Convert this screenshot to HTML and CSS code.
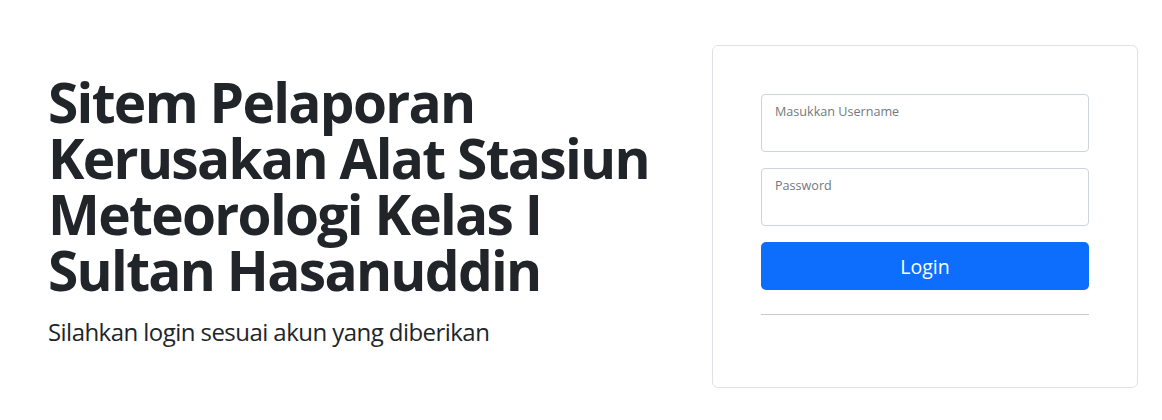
FILE: index.html
```html
<!DOCTYPE html>
<html lang="id">
<head>
<meta charset="utf-8">
<title>Login</title>
<link rel="stylesheet" href="styles.css">
</head>
<body>
<main class="page">
  <section class="intro">
    <h1 class="title">Sitem Pelaporan Kerusakan Alat Stasiun Meteorologi Kelas I Sultan Hasanuddin</h1>
    <p class="lead">Silahkan login sesuai akun yang diberikan</p>
  </section>
  <section class="card">
    <form class="form">
      <label class="field">
        <span class="field-label">Masukkan Username</span>
        <input class="field-input" type="text">
      </label>
      <label class="field">
        <span class="field-label">Password</span>
        <input class="field-input" type="password">
      </label>
      <button class="btn" type="button">Login</button>
      <hr class="divider">
    </form>
  </section>
</main>
</body>
</html>
```
FILE: styles.css
```css
* { box-sizing: border-box; }
html, body { margin: 0; padding: 0; background: #fff; }
body {
  font-family: "Open Sans", "Noto Sans", sans-serif;
  color: #212529;
}
.page {
  display: flex;
  align-items: center;
  padding: 45px 24px 0 48px;
  gap: 32px;
}
.intro {
  flex: 1;
}
.title {
  margin: 0 0 16px;
  font-size: 55px;
  line-height: 56px;
  font-weight: 700;
  letter-spacing: -1.7px;
}
.lead {
  margin: 0 0 10px;
  font-size: 24px;
  line-height: 36px;
  letter-spacing: -0.55px;
}
.card {
  width: 426px;
  flex: none;
  border: 1px solid #dee2e6;
  border-radius: 6px;
  padding: 48px;
}
.form {
  display: flex;
  flex-direction: column;
}
.field {
  display: flex;
  flex-direction: column;
  height: 58px;
  border: 1px solid #ced4da;
  border-radius: 4px;
  padding: 8px 12px 0 13px;
  margin-bottom: 16px;
}
.field-label {
  font-size: 12.6px;
  line-height: 18px;
  color: #74787c;
}
.field-input {
  border: 0;
  outline: 0;
  padding: 0;
  font: inherit;
  font-size: 16px;
  background: transparent;
}
.btn {
  height: 48px;
  border: 0;
  border-radius: 5px;
  background: #0d6efd;
  color: #fff;
  font-family: inherit;
  font-size: 19.5px;
}
.divider {
  margin: 24px 0;
  border: 0;
  border-top: 1px solid #c8c9ca;
}
```
